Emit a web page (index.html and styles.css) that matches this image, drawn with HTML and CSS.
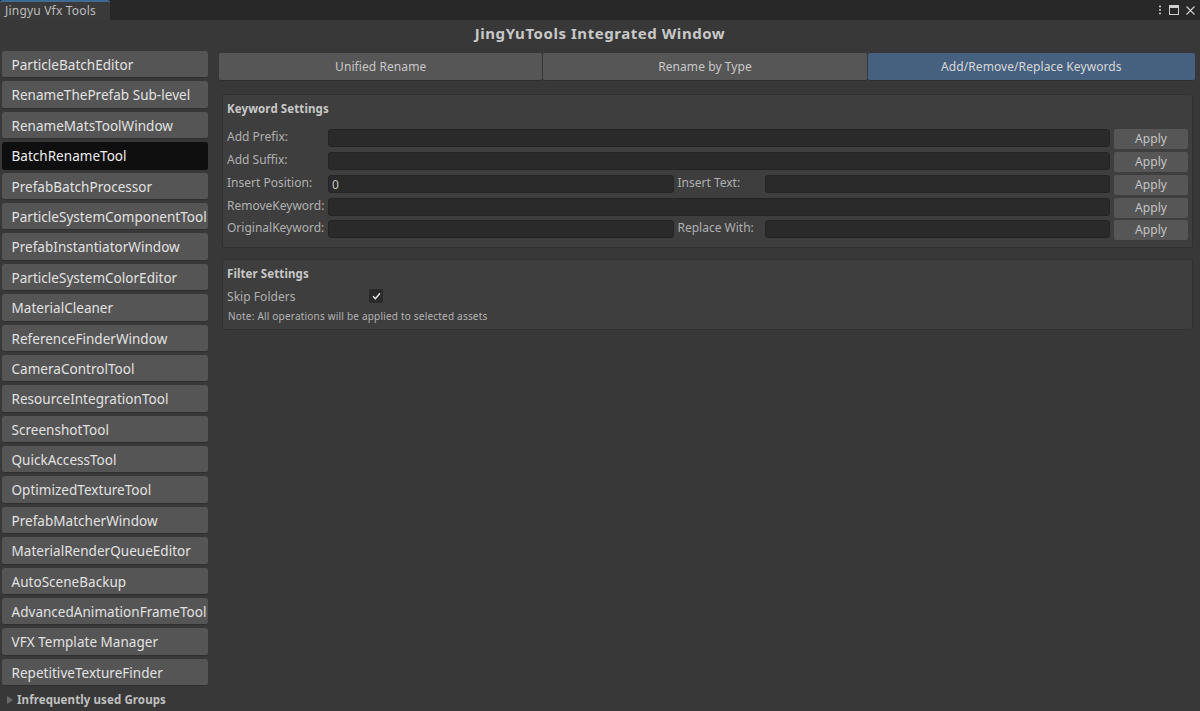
FILE: index.html
```html
<!DOCTYPE html>
<html lang="en">
<head>
<meta charset="utf-8">
<title>Jingyu Vfx Tools</title>
<link rel="stylesheet" href="styles.css">
</head>
<body>
<div class="window">
  <header class="titlebar">
    <div class="wintab">Jingyu Vfx Tools</div>
    <div class="winicons">
      <svg width="4" height="10" viewBox="0 0 4 10"><circle cx="2" cy="1.5" r="1" fill="#d0d0d0"/><circle cx="2" cy="5" r="1" fill="#d0d0d0"/><circle cx="2" cy="8.5" r="1" fill="#d0d0d0"/></svg>
      <svg width="10" height="10" viewBox="0 0 10 10"><rect x=".5" y=".5" width="9" height="9" fill="none" stroke="#d0d0d0"/><rect x="0" y="0" width="10" height="3" fill="#d0d0d0"/></svg>
      <svg width="9" height="9" viewBox="0 0 9 9"><path d="M.5.5l8 8M8.5.5l-8 8" stroke="#d0d0d0" stroke-width="1.1" fill="none"/></svg>
    </div>
  </header>
  <h1 class="heading">JingYuTools Integrated Window</h1>
  <div class="main">
    <nav class="sidebar">
      <div class="tool">ParticleBatchEditor</div>
      <div class="tool">RenameThePrefab Sub-level</div>
      <div class="tool">RenameMatsToolWindow</div>
      <div class="tool active">BatchRenameTool</div>
      <div class="tool">PrefabBatchProcessor</div>
      <div class="tool">ParticleSystemComponentTool</div>
      <div class="tool">PrefabInstantiatorWindow</div>
      <div class="tool">ParticleSystemColorEditor</div>
      <div class="tool">MaterialCleaner</div>
      <div class="tool">ReferenceFinderWindow</div>
      <div class="tool">CameraControlTool</div>
      <div class="tool">ResourceIntegrationTool</div>
      <div class="tool">ScreenshotTool</div>
      <div class="tool">QuickAccessTool</div>
      <div class="tool">OptimizedTextureTool</div>
      <div class="tool">PrefabMatcherWindow</div>
      <div class="tool">MaterialRenderQueueEditor</div>
      <div class="tool">AutoSceneBackup</div>
      <div class="tool">AdvancedAnimationFrameTool</div>
      <div class="tool">VFX Template Manager</div>
      <div class="tool">RepetitiveTextureFinder</div>
      <div class="group"><span class="arrow"></span>Infrequently used Groups</div>
    </nav>
    <section class="content">
      <div class="tabs">
        <div class="tab">Unified Rename</div>
        <div class="tab">Rename by Type</div>
        <div class="tab selected">Add/Remove/Replace Keywords</div>
      </div>
      <div class="panel keyword">
        <h2 class="panel-title">Keyword Settings</h2>
        <div class="row"><span class="label">Add Prefix:</span><div class="field"></div><div class="apply">Apply</div></div>
        <div class="row"><span class="label">Add Suffix:</span><div class="field"></div><div class="apply">Apply</div></div>
        <div class="row"><span class="label">Insert Position:</span><div class="field">0</div><span class="label2">Insert Text:</span><div class="field"></div><div class="apply">Apply</div></div>
        <div class="row"><span class="label">RemoveKeyword:</span><div class="field"></div><div class="apply">Apply</div></div>
        <div class="row"><span class="label">OriginalKeyword:</span><div class="field"></div><span class="label2">Replace With:</span><div class="field"></div><div class="apply">Apply</div></div>
      </div>
      <div class="panel filter">
        <h2 class="panel-title">Filter Settings</h2>
        <div class="check-row">
          <span class="check-label">Skip Folders</span>
          <span class="checkbox"><svg width="9" height="8" viewBox="0 0 9 8"><path d="M1 4.2l2.4 2.4L8 1.2" stroke="#e8e8e8" stroke-width="1.4" fill="none"/></svg></span>
        </div>
        <p class="note">Note: All operations will be applied to selected assets</p>
      </div>
    </section>
  </div>
</div>
</body>
</html>
```
FILE: styles.css
```css
* { box-sizing: border-box; }
html, body { margin: 0; padding: 0; height: 100%; }
body { background: #383838; font-family: "Noto Sans", "Open Sans", sans-serif; color: #c4c4c4; overflow: hidden; }
.window { width: 1200px; height: 711px; display: flex; flex-direction: column; overflow: hidden; }
.titlebar { height: 20px; flex: none; background: #282828; display: flex; justify-content: space-between; }
.wintab { width: 110px; height: 20px; background: #3a3a3a; border-top: 2px solid #3f6a94; border-radius: 3px 3px 0 0; font-size: 12px; line-height: 18px; padding-left: 5px; letter-spacing: .2px; color: #bdbdbd; white-space: nowrap; }
.winicons { display: flex; align-items: center; gap: 7px; padding-right: 5px; }
.heading { margin: 0; height: 31px; flex: none; text-align: center; font-size: 15px; line-height: 27px; font-weight: 700; letter-spacing: .55px; color: #c8c8c8; }
.main { flex: 1; display: flex; min-height: 0; }
.sidebar { width: 219px; flex: none; padding-left: 2px; display: flex; flex-direction: column; gap: 3px; }
.tool { width: 205.5px; height: 27.4px; flex: none; background: #555; border-radius: 3px; border-bottom: 1px solid #2f2f2f; font-size: 13.5px; line-height: 28px; padding-left: 9.5px; color: #e2e2e2; letter-spacing: .03px; white-space: nowrap; overflow: hidden; }
.tool.active { background: #0f0f0f; border-bottom-color: #0f0f0f; color: #eee; }
.group { font-size: 11.5px; font-weight: 700; line-height: 14px; color: #c0c0c0; letter-spacing: .1px; display: flex; align-items: center; padding-left: 5px; margin-top: 4px; white-space: nowrap; }
.arrow { width: 0; height: 0; border-left: 6px solid #6a6a6a; border-top: 4px solid transparent; border-bottom: 4px solid transparent; margin-right: 4px; }
.content { flex: 1; min-width: 0; padding-top: 2px; }
.tabs { display: flex; width: 976px; height: 28px; gap: 1px; }
.tab { flex: 323px; background: #565656; border-bottom: 1px solid #2f2f2f; border-radius: 2px; text-align: center; font-size: 12px; line-height: 27px; color: #c8c8c8; letter-spacing: .08px; }
.tab.selected { flex: 327px; background: #46607f; color: #d8d8d8; }
.panel { width: 971px; margin-left: 3px; background: #3e3e3e; border: 1px solid #303030; border-radius: 3px; padding: 0 4px 0 4px; }
.keyword { height: 154px; margin-top: 13px; }
.filter { height: 71px; margin-top: 11px; }
.panel-title { margin: 0; font-size: 11.5px; font-weight: 700; letter-spacing: .1px; color: #c8c8c8; height: 34px; line-height: 27px; }
.filter .panel-title { height: 27px; line-height: 28px; }
.row { display: flex; height: 22.85px; align-items: flex-start; white-space: nowrap; }
.label { width: 101px; flex: none; font-size: 12px; line-height: 16px; color: #b0b0b0; }
.label2 { width: 91px; flex: none; padding-left: 4px; font-size: 12px; line-height: 16px; color: #b0b0b0; }
.field { flex: 1; height: 18px; background: #2a2a2a; border: 1px solid #242424; border-radius: 3px; font-size: 12px; line-height: 17px; padding-left: 3px; color: #c4c4c4; }
.apply { width: 74px; height: 20px; margin-left: 4px; flex: none; background: #565656; border-radius: 2px; text-align: center; font-size: 12px; line-height: 19px; letter-spacing: .1px; color: #c4c4c4; }
.check-row { display: flex; align-items: center; height: 18px; }
.check-label { width: 142px; flex: none; font-size: 12px; letter-spacing: .05px; color: #b0b0b0; }
.checkbox { width: 14px; height: 14px; background: #2a2a2a; border-radius: 2px; display: flex; align-items: center; justify-content: center; }
.note { margin: 4px 0 0 1px; font-size: 10px; line-height: 14px; letter-spacing: .2px; color: #b4b4b4; }
```
